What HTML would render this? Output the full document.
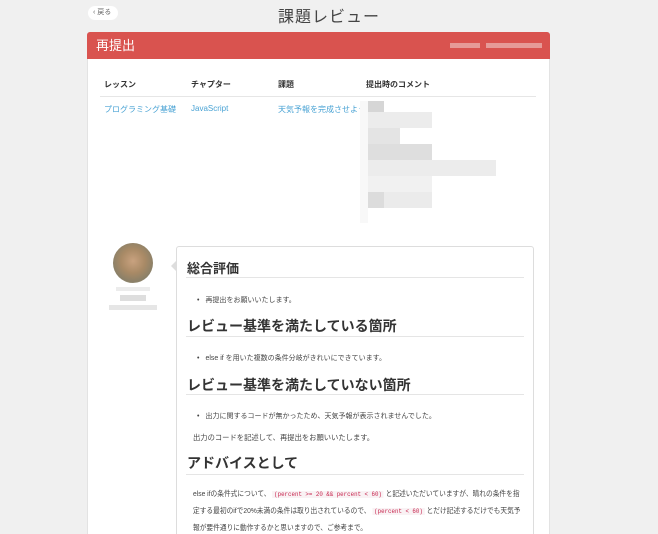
<!DOCTYPE html>
<html><head><meta charset="utf-8"><style>
*{margin:0;padding:0;box-sizing:border-box}
html,body{width:658px;height:534px;overflow:hidden}
body{background:#f0f0f0;font-family:"Liberation Sans","Noto Sans CJK JP",sans-serif;position:relative;color:#333}
.abs{position:absolute}
.back{left:88px;top:6px;width:30px;height:14px;background:#fff;border-radius:8px;font-size:7px;color:#666;line-height:14px;padding-left:5px}
.title{left:0;width:658px;top:3px;text-align:center;font-size:16px;color:#444;letter-spacing:1px}
.card{left:87px;top:32px;width:463px;height:520px;background:#fff;border:1px solid #e3e3e3;border-radius:3px}
.hdr{left:87px;top:32px;width:463px;height:27px;background:#d9534f;border-radius:3px 3px 0 0;color:#fff;font-size:13px;line-height:27px;padding-left:9px}
.th{top:79px;font-size:8px;font-weight:bold;color:#333}
.td{top:104px;font-size:8px;color:#4aa3d4}
.line{height:1px;background:#e6e6e6}
.px{position:absolute;width:16px;height:16px}
.box{left:176px;top:246px;width:358px;height:310px;background:#fff;border:1px solid #ddd;border-radius:3px}
h2{position:absolute;left:187px;font-size:13px;font-weight:bold;color:#333}
.hl{position:absolute;left:186px;width:338px;height:1px;background:#e5e5e5}
.li{position:absolute;left:197px;font-size:7px;color:#444}
.li:before{content:"•";margin-right:6px}
.p{position:absolute;left:193px;font-size:7.3px;color:#444}
code{font-family:"Liberation Mono",monospace;color:#c7254e;background:#f9f2f4;font-size:6.3px;padding:0 2px}
</style></head><body>
<div class="abs back">‹ 戻る</div>
<div class="abs title">課題レビュー</div>
<div class="abs card"></div>
<div class="abs hdr">再提出<span style="position:absolute;left:363px;top:11px;width:30px;height:5px;background:#e69a97"></span><span style="position:absolute;left:399px;top:11px;width:56px;height:5px;background:#e69a97"></span></div>
<div class="abs th" style="left:104px">レッスン</div>
<div class="abs th" style="left:191px">チャプター</div>
<div class="abs th" style="left:278px">課題</div>
<div class="abs th" style="left:366px">提出時のコメント</div>
<div class="abs line" style="left:100px;top:96px;width:436px"></div>
<div class="abs td" style="left:104px">プログラミング基礎</div>
<div class="abs td" style="left:191px">JavaScript</div>
<div class="abs td" style="left:278px">天気予報を完成させよう</div>
<div class="px" style="left:360px;top:101px;width:8px;height:122px;background:#f8f8f8"></div>
<div class="px" style="left:368px;top:101px;height:11px;background:#d6d6d6"></div>
<div class="px" style="left:368px;top:112px;width:64px;background:#ececec"></div>
<div class="px" style="left:368px;top:128px;width:32px;background:#e4e4e4"></div>
<div class="px" style="left:368px;top:144px;width:64px;background:#dedede"></div>
<div class="px" style="left:368px;top:160px;width:128px;background:#ececec"></div>
<div class="px" style="left:368px;top:176px;width:64px;background:#f1f1f1"></div>
<div class="px" style="left:368px;top:192px;width:64px;background:#ebebeb"></div>
<div class="px" style="left:368px;top:192px;background:#dcdcdc"></div>
<div class="abs" style="left:113px;top:243px;width:40px;height:40px;border-radius:50%;background:radial-gradient(circle at 50% 45%,#c9a27f 0,#a98a66 40%,#8a8068 70%,#cfcfc0 100%)"></div>
<div class="abs" style="left:116px;top:287px;width:34px;height:4px;background:#ececec"></div>
<div class="abs" style="left:120px;top:295px;width:26px;height:6px;background:#dedede"></div>
<div class="abs" style="left:109px;top:305px;width:48px;height:5px;background:#e6e6e6"></div>
<div class="abs box"></div>
<div class="abs" style="left:171px;top:261px;width:0;height:0;border:5px solid transparent;border-right-color:#ddd;border-left:0"></div>
<h2 style="top:258px">総合評価</h2><div class="hl" style="top:277px"></div>
<div class="li" style="top:295px">再提出をお願いいたします。</div>
<h2 style="top:316px;font-size:14px">レビュー基準を満たしている箇所</h2><div class="hl" style="top:336px"></div>
<div class="li" style="top:353px">else if を用いた複数の条件分岐がきれいにできています。</div>
<h2 style="top:375px;font-size:14px">レビュー基準を満たしていない箇所</h2><div class="hl" style="top:394px"></div>
<div class="li" style="top:411px">出力に関するコードが無かったため、天気予報が表示されませんでした。</div>
<div class="p" style="top:433px">出力のコードを記述して、再提出をお願いいたします。</div>
<h2 style="top:453px;font-size:14px">アドバイスとして</h2><div class="hl" style="top:474px"></div>
<div class="p" style="top:486px;line-height:16px;white-space:nowrap;transform:scaleX(0.92);transform-origin:0 0">else ifの条件式について、 <code>(percent &gt;= 20 &amp;&amp; percent &lt; 60)</code> と記述いただいていますが、晴れの条件を指<br>定する最初のifで20%未満の条件は取り出されているので、 <code>(percent &lt; 60)</code> とだけ記述するだけでも天気予<br>報が要件通りに動作するかと思いますので、ご参考まで。</div>
</body></html>
